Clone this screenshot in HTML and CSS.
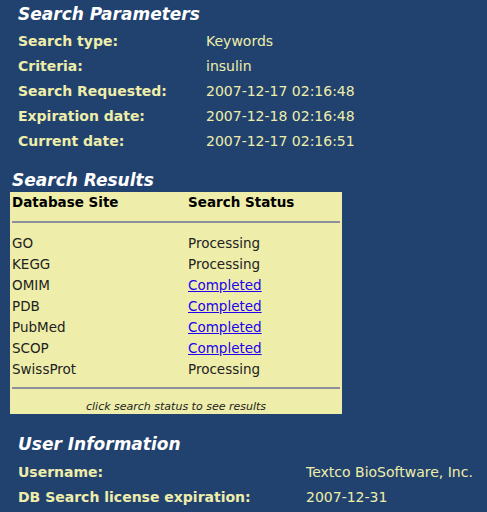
FILE: index.html
```html
<!DOCTYPE html>
<html lang="en">
<head>
    <meta charset="UTF-8">
    <title>Search Status</title>
    <link rel="stylesheet" href="styles.css">
</head>
<body>

<div class="section params">
    <h2>Search Parameters</h2>
    <table class="info">
        <tr><th>Search type:</th><td>Keywords</td></tr>
        <tr><th>Criteria:</th><td>insulin</td></tr>
        <tr><th>Search Requested:</th><td>2007-12-17 02:16:48</td></tr>
        <tr><th>Expiration date:</th><td>2007-12-18 02:16:48</td></tr>
        <tr><th>Current date:</th><td>2007-12-17 02:16:51</td></tr>
    </table>
</div>

<div class="section results">
    <h2>Search Results</h2>
    <div class="results-box">
        <table class="status">
            <tr class="head"><th>Database Site</th><th>Search Status</th></tr>
            <tr class="rule"><td colspan="2"><hr></td></tr>
            <tr><td>GO</td><td>Processing</td></tr>
            <tr><td>KEGG</td><td>Processing</td></tr>
            <tr><td>OMIM</td><td><a href="#">Completed</a></td></tr>
            <tr><td>PDB</td><td><a href="#">Completed</a></td></tr>
            <tr><td>PubMed</td><td><a href="#">Completed</a></td></tr>
            <tr><td>SCOP</td><td><a href="#">Completed</a></td></tr>
            <tr><td>SwissProt</td><td>Processing</td></tr>
            <tr class="rule last"><td colspan="2"><hr></td></tr>
        </table>
        <p class="hint">click search status to see results</p>
    </div>
</div>

<div class="section user">
    <h2>User Information</h2>
    <table class="info">
        <tr><th>Username:</th><td>Textco BioSoftware, Inc.</td></tr>
        <tr><th>DB Search license expiration:</th><td>2007-12-31</td></tr>
    </table>
</div>

</body>
</html>
```
FILE: styles.css
```css
body {
    font-family: "DejaVu Sans", Verdana, sans-serif;
    background-color: #21426f;
    color: #eeeeaa;
    margin: 0;
    font-size: 14px;
}

h2 {
    color: white;
    font-size: 17px;
    line-height: 20px;
    font-style: italic;
    font-weight: bold;
    margin: 0;
}

.params {
    padding: 4px 0 0 18px;
}

.info {
    border-collapse: collapse;
    margin-top: 4px;
}

.info th {
    text-align: left;
    font-weight: bold;
    height: 25px;
    padding: 0;
}

.info td {
    padding: 0;
}

.params .info th {
    width: 188px;
}

.results {
    padding: 17px 0 0 12px;
}

.results-box {
    background-color: #eeeeaa;
    color: #222;
    width: 332px;
    margin-left: -2px;
    margin-top: 2px;
    padding: 0 0 1px;
    font-size: 13.5px;
}

.status {
    border-collapse: collapse;
    width: 100%;
}

.status th, .status td {
    text-align: left;
    padding: 0 2px;
    height: 21px;
}

.status th:first-child, .status td:first-child {
    width: 172px;
}

.status .head th {
    height: 20px;
    color: #000;
}

.status .rule td {
    height: 20px;
}

.status .rule.last td {
    height: 18px;
}

.status hr {
    border: none;
    border-top: 2px solid #8e8e9a;
    margin: 0;
}

.status a {
    color: #2200ee;
}

.hint {
    font-size: 11px;
    line-height: 13px;
    font-style: italic;
    text-align: center;
    margin: 3px 0 0;
}

.user {
    padding: 20px 0 0 18px;
}

.user .info {
    margin-top: 5px;
}

.user .info th {
    width: 288px;
}
```
